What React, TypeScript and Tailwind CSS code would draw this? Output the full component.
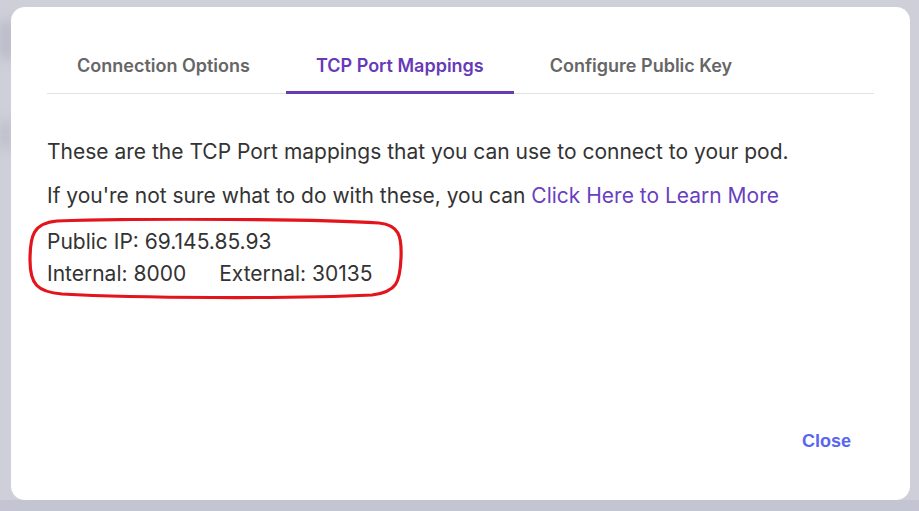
import { useState } from "react";

const tabs = ["Connection Options", "TCP Port Mappings", "Configure Public Key"];

export default function App() {
  const [active, setActive] = useState(1);

  return (
    <div className="relative h-[511px] w-[919px] overflow-hidden bg-[#cfcfd9]">
      {/* blurred page behind the modal */}
      <div className="absolute left-0 top-[20px] h-[40px] w-[14px] rounded-full bg-[#b9b9c6] blur-[6px]" />
      <div className="absolute left-0 top-[120px] h-[30px] w-[12px] rounded-full bg-[#bdbdca] blur-[6px]" />
      <div className="absolute bottom-0 left-0 h-[11px] w-full bg-[#c4c5d2]" />

      <div className="absolute left-[11px] top-[7px] flex h-[493px] w-[899px] flex-col rounded-[14px] bg-white px-[36px] pt-[39px] font-['Inter',sans-serif]">
        {/* Tabs */}
        <div className="flex h-[48px] gap-[6px] border-b border-[#e2e2e6]">
          {tabs.map((t, i) => (
            <button
              key={t}
              onClick={() => setActive(i)}
              className={`relative flex items-center px-[30px] pb-[8px] text-[18px] font-semibold ${
                active === i ? "text-[#673ab7]" : "text-[#666666]"
              }`}
            >
              {t}
              {active === i && (
                <span className="absolute -bottom-px left-0 right-0 h-[3px] bg-[#673ab7]" />
              )}
            </button>
          ))}
        </div>

        {/* Body */}
        <div className="relative mt-[42px] text-[21px] leading-[32px] text-[#333333]">
          <p>These are the TCP Port mappings that you can use to connect to your pod.</p>
          <p className="mt-[12px]">
            If you're not sure what to do with these, you can{" "}
            <a href="#" className="text-[#6a3fc1]">
              Click Here to Learn More
            </a>
          </p>
          <p className="mt-[14px]">Public IP: 69.145.85.93</p>
          <p className="flex gap-[33px]">
            <span>Internal: 8000</span>
            <span>External: 30135</span>
          </p>

          {/* hand-drawn annotation */}
          <svg
            className="pointer-events-none absolute left-[-20px] top-[82px]"
            width="380"
            height="82"
            viewBox="0 0 380 82"
          >
            <path
              d="M30 3 C120 0 290 1 352 5 C372 7 375 18 374 40 C373 64 370 74 345 77 C260 81 110 80 35 76 C10 74 3 66 3 42 C3 18 6 5 30 3 Z"
              fill="none"
              stroke="#e3141b"
              strokeWidth="3.2"
            />
          </svg>
        </div>

        <div className="mt-auto flex justify-end pb-[45px] pr-[23px]">
          <button className="font-['Liberation_Sans',sans-serif] text-[18px] font-bold text-[#5865f2]">
            Close
          </button>
        </div>
      </div>
    </div>
  );
}
